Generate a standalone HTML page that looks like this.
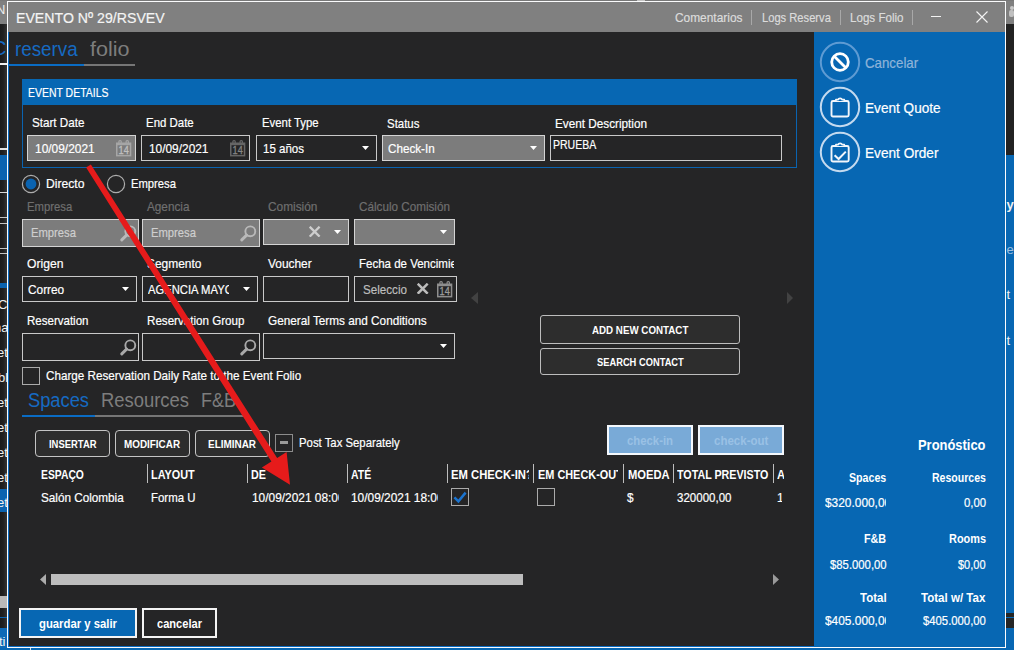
<!DOCTYPE html>
<html lang="es"><head><meta charset="utf-8"><title>EVENTO Nº 29/RSVEV</title>
<style>
html,body{margin:0;padding:0}
body{width:1014px;height:650px;overflow:hidden;position:relative;background:#1e1e1e;font-family:"Liberation Sans", sans-serif;}
.r{position:absolute;display:block}
.t{position:absolute;white-space:pre;transform-origin:0 0;display:block}
.k{-webkit-text-stroke:0.2px currentColor}
.clip{position:absolute;overflow:hidden}
</style></head>
<body>
<div class="r" style="left:0px;top:0px;width:8px;height:24px;background:#808080;"></div>
<div class="r" style="left:0px;top:24px;width:8px;height:626px;background:linear-gradient(90deg,#1b1b1b 0,#202020 40%,#3a3a3a 100%);"></div>
<span class="t" style="left:-4px;top:3px;font-size:13px;line-height:13px;color:#ececec;">N</span>
<span class="t" style="left:-8px;top:38px;font-size:20px;line-height:20px;color:#166ac2;">C</span>
<div class="r" style="left:0px;top:63px;width:8px;height:2px;background:#f0f0f0;"></div>
<div class="r" style="left:0px;top:148px;width:8px;height:2px;background:#e4e4e4;"></div>
<div class="r" style="left:0px;top:155px;width:8px;height:25px;background:#0a63b0;"></div>
<div class="r" style="left:0px;top:192px;width:8px;height:1px;background:#d8d8d8;"></div>
<div class="r" style="left:0px;top:217px;width:8px;height:1px;background:#c4c4c4;"></div>
<div class="r" style="left:0px;top:223px;width:8px;height:1px;background:#c4c4c4;"></div>
<div class="r" style="left:0px;top:248px;width:8px;height:1px;background:#c4c4c4;"></div>
<div class="r" style="left:0px;top:253px;width:8px;height:1px;background:#c4c4c4;"></div>
<div class="r" style="left:0px;top:283px;width:8px;height:5px;background:#0a63b0;"></div>
<span class="t" style="left:-2px;top:298px;font-size:13px;line-height:13px;color:#f0f0f0;">C</span>
<span class="t" style="left:-6px;top:321px;font-size:13px;line-height:13px;color:#f0f0f0;">ha</span>
<span class="t" style="left:-3px;top:346px;font-size:13px;line-height:13px;color:#f0f0f0;">et</span>
<span class="t" style="left:-2px;top:371px;font-size:13px;line-height:13px;color:#f0f0f0;">bl</span>
<span class="t" style="left:-3px;top:396px;font-size:13px;line-height:13px;color:#f0f0f0;">et</span>
<span class="t" style="left:-3px;top:421px;font-size:13px;line-height:13px;color:#f0f0f0;">et</span>
<span class="t" style="left:-3px;top:446px;font-size:13px;line-height:13px;color:#f0f0f0;">et</span>
<span class="t" style="left:-3px;top:471px;font-size:13px;line-height:13px;color:#f0f0f0;">et</span>
<div class="r" style="left:0px;top:489px;width:8px;height:23px;background:#0a63b0;"></div>
<span class="t" style="left:-3px;top:496px;font-size:13px;line-height:13px;color:#f0f0f0;">et</span>
<div class="r" style="left:0px;top:596px;width:8px;height:12px;background:#b9b9b9;"></div>
<div class="r" style="left:0px;top:617px;width:8px;height:1px;background:#0a63b0;"></div>
<div class="r" style="left:0px;top:628px;width:8px;height:22px;background:#0d69b6;"></div>
<span class="t" style="left:-1px;top:635px;font-size:13px;line-height:13px;color:#f4f4f4;">ti</span>
<div class="r" style="left:1006px;top:0px;width:8px;height:24px;background:#808080;"></div>
<div class="r" style="left:1010px;top:6px;width:4px;height:4px;background:#c8c8c8;border-radius:2px;"></div>
<div class="r" style="left:1009px;top:10px;width:5px;height:7px;background:#c0c0c0;border-radius:2px;"></div>
<div class="r" style="left:1006px;top:24px;width:8px;height:131px;background:#222222;"></div>
<div class="r" style="left:1006px;top:155px;width:8px;height:495px;background:#0767b3;"></div>
<div class="r" style="left:1006px;top:613px;width:8px;height:4px;background:#252525;"></div>
<div class="r" style="left:1006px;top:618px;width:8px;height:10px;background:#252525;"></div>
<span class="t" style="left:1006.5px;top:198px;font-size:13px;line-height:13px;color:#f0f0f0;font-weight:700;">yo</span>
<span class="t" style="left:1006.5px;top:243px;font-size:13px;line-height:13px;color:#9dbfe0;">e</span>
<span class="t" style="left:1006.5px;top:288px;font-size:13px;line-height:13px;color:#f0f0f0;">t</span>
<span class="t" style="left:1006.5px;top:334px;font-size:13px;line-height:13px;color:#f0f0f0;">t</span>
<div class="r" style="left:0px;top:648px;width:1014px;height:2px;background:#0767b3;"></div>
<div class="r" style="left:30px;top:648px;width:1px;height:2px;background:#d0e0f0;"></div>
<div class="r" style="left:0px;top:0px;width:1014px;height:1px;background:#787878;"></div>
<div class="r" style="left:637px;top:0px;width:8px;height:1px;background:#c4c4c4;"></div>
<div class="r" style="left:7px;top:1px;width:999px;height:647px;background:#252526;border:1px solid #fbfcfd;box-sizing:border-box;"></div>
<div class="r" style="left:8px;top:2px;width:997px;height:30px;background:#808080;"></div>
<div class="r" style="left:8px;top:32px;width:1px;height:615px;background:#0a6cc4;"></div>
<div class="r" style="left:8px;top:646px;width:997px;height:1px;background:#0a6cc4;"></div>
<div class="r" style="left:751px;top:10px;width:1px;height:15px;background:#a8a8a8;"></div>
<div class="r" style="left:840px;top:10px;width:1px;height:15px;background:#a8a8a8;"></div>
<div class="r" style="left:912px;top:10px;width:1px;height:15px;background:#a8a8a8;"></div>
<div class="r" style="left:931px;top:16px;width:10px;height:1px;background:#f2f2f2;"></div>
<svg class="r" style="left:976px;top:11px" width="12" height="12" viewBox="0 0 12 12"><path d="M0.5 0.5L11.5 11.5M11.5 0.5L0.5 11.5" stroke="#f4f4f4" stroke-width="1.1" fill="none"/></svg>
<div class="r" style="left:9px;top:64px;width:75px;height:2px;background:#0a6cc4;"></div>
<div class="r" style="left:84px;top:64px;width:51px;height:2px;background:#767676;"></div>
<div class="r" style="left:814px;top:32px;width:191px;height:615px;background:#0767b3;"></div>
<div class="r" style="left:22px;top:79px;width:775px;height:89px;border:1px solid #0a63b0;box-sizing:border-box;"></div>
<div class="r" style="left:22px;top:79px;width:775px;height:26px;background:#0767b3;"></div>
<div class="r" style="left:27px;top:135px;width:109px;height:26px;background:#7c7c7c;border:1px solid #d4d4d4;box-sizing:border-box;"></div>
<div class="r" style="left:141px;top:135px;width:109px;height:26px;border:1px solid #c9c9c9;box-sizing:border-box;"></div>
<div class="r" style="left:256px;top:135px;width:121px;height:26px;border:1px solid #c9c9c9;box-sizing:border-box;"></div>
<div class="r" style="left:382px;top:135px;width:163px;height:26px;background:#7c7c7c;border:1px solid #d4d4d4;box-sizing:border-box;"></div>
<div class="r" style="left:550px;top:135px;width:232px;height:26px;border:1px solid #c9c9c9;box-sizing:border-box;"></div>
<svg class="r" style="left:116px;top:140px" width="16" height="17" viewBox="0 0 16 17"><rect x="0.75" y="3.25" width="13.8" height="12.4" fill="none" stroke="#a6a6a6" stroke-width="1.5"/><rect x="0.75" y="3" width="13.8" height="2.2" fill="#a6a6a6"/><rect x="2.9" y="0.7" width="2.3" height="3.6" rx="0.9" fill="none" stroke="#a6a6a6" stroke-width="1.2"/><rect x="10.1" y="0.7" width="2.3" height="3.6" rx="0.9" fill="none" stroke="#a6a6a6" stroke-width="1.2"/><text x="7.7" y="14.3" font-family='"Liberation Sans", sans-serif' font-size="10.4" text-anchor="middle" fill="#c0c0c0" stroke="#c0c0c0" stroke-width="0.3" textLength="10.2" lengthAdjust="spacingAndGlyphs">14</text></svg>
<svg class="r" style="left:230px;top:140px" width="16" height="17" viewBox="0 0 16 17"><rect x="0.75" y="3.25" width="13.8" height="12.4" fill="none" stroke="#666666" stroke-width="1.5"/><rect x="0.75" y="3" width="13.8" height="2.2" fill="#666666"/><rect x="2.9" y="0.7" width="2.3" height="3.6" rx="0.9" fill="none" stroke="#666666" stroke-width="1.2"/><rect x="10.1" y="0.7" width="2.3" height="3.6" rx="0.9" fill="none" stroke="#666666" stroke-width="1.2"/><text x="7.7" y="14.3" font-family='"Liberation Sans", sans-serif' font-size="10.4" text-anchor="middle" fill="#858585" stroke="#858585" stroke-width="0.3" textLength="10.2" lengthAdjust="spacingAndGlyphs">14</text></svg>
<svg class="r" style="left:362px;top:146px" width="7" height="4" viewBox="0 0 7 4"><path d="M0 0H7L3.5 4Z" fill="#fff"/></svg>
<svg class="r" style="left:530px;top:146px" width="7" height="4" viewBox="0 0 7 4"><path d="M0 0H7L3.5 4Z" fill="#fff"/></svg>
<svg class="r" style="left:21px;top:174px" width="20" height="20" viewBox="0 0 20 20"><circle cx="10" cy="10" r="8.6" fill="none" stroke="#adadad" stroke-width="1.2"/><circle cx="10" cy="10" r="5.4" fill="#0a63b0"/></svg>
<svg class="r" style="left:106px;top:174px" width="20" height="20" viewBox="0 0 20 20"><circle cx="10" cy="10" r="8.6" fill="none" stroke="#adadad" stroke-width="1.2"/></svg>
<div class="r" style="left:22px;top:219px;width:117px;height:28px;background:#7c7c7c;border:1px solid #d4d4d4;box-sizing:border-box;"></div>
<div class="r" style="left:142px;top:219px;width:118px;height:28px;background:#7c7c7c;border:1px solid #d4d4d4;box-sizing:border-box;"></div>
<div class="r" style="left:263px;top:219px;width:86px;height:26px;background:#7c7c7c;border:1px solid #d4d4d4;box-sizing:border-box;"></div>
<div class="r" style="left:354px;top:219px;width:101px;height:26px;background:#7c7c7c;border:1px solid #d4d4d4;box-sizing:border-box;"></div>
<svg class="r" style="left:120px;top:225px" width="17" height="17" viewBox="0 0 17 17"><circle cx="10.3" cy="6.3" r="4.95" fill="none" stroke="#b9b9b9" stroke-width="1.9"/><path d="M6.6 10.1L1.8 14.9" stroke="#b9b9b9" stroke-width="2.9" stroke-linecap="round"/></svg>
<svg class="r" style="left:240px;top:225px" width="17" height="17" viewBox="0 0 17 17"><circle cx="10.3" cy="6.3" r="4.95" fill="none" stroke="#b9b9b9" stroke-width="1.9"/><path d="M6.6 10.1L1.8 14.9" stroke="#b9b9b9" stroke-width="2.9" stroke-linecap="round"/></svg>
<svg class="r" style="left:309.3px;top:226.2px" width="11.3" height="11.3" viewBox="0 0 11.3 11.3"><path d="M0.7 0.7L10.600000000000001 10.600000000000001M10.600000000000001 0.7L0.7 10.600000000000001" stroke="#cdcdcd" stroke-width="2.3" fill="none"/></svg>
<svg class="r" style="left:334px;top:230px" width="7" height="4" viewBox="0 0 7 4"><path d="M0 0H7L3.5 4Z" fill="#fff"/></svg>
<svg class="r" style="left:440px;top:230px" width="7" height="4" viewBox="0 0 7 4"><path d="M0 0H7L3.5 4Z" fill="#fff"/></svg>
<div class="r" style="left:22px;top:276px;width:115px;height:26px;border:1px solid #c9c9c9;box-sizing:border-box;"></div>
<div class="r" style="left:142px;top:276px;width:116px;height:26px;border:1px solid #c9c9c9;box-sizing:border-box;"></div>
<div class="r" style="left:263px;top:276px;width:86px;height:26px;border:1px solid #c9c9c9;box-sizing:border-box;"></div>
<div class="r" style="left:354px;top:276px;width:103px;height:26px;border:1px solid #c9c9c9;box-sizing:border-box;"></div>
<svg class="r" style="left:122px;top:287px" width="7" height="4" viewBox="0 0 7 4"><path d="M0 0H7L3.5 4Z" fill="#fff"/></svg>
<svg class="r" style="left:243px;top:287px" width="7" height="4" viewBox="0 0 7 4"><path d="M0 0H7L3.5 4Z" fill="#fff"/></svg>
<svg class="r" style="left:417.4px;top:282.9px" width="11.4" height="11.4" viewBox="0 0 11.4 11.4"><path d="M0.7 0.7L10.700000000000001 10.700000000000001M10.700000000000001 0.7L0.7 10.700000000000001" stroke="#bcbcbc" stroke-width="2.5" fill="none"/></svg>
<svg class="r" style="left:437px;top:280.5px" width="16" height="17" viewBox="0 0 16 17"><rect x="0.75" y="3.25" width="13.8" height="12.4" fill="none" stroke="#8e8e8e" stroke-width="1.5"/><rect x="0.75" y="3" width="13.8" height="2.2" fill="#8e8e8e"/><rect x="2.9" y="0.7" width="2.3" height="3.6" rx="0.9" fill="none" stroke="#8e8e8e" stroke-width="1.2"/><rect x="10.1" y="0.7" width="2.3" height="3.6" rx="0.9" fill="none" stroke="#8e8e8e" stroke-width="1.2"/><text x="7.7" y="14.3" font-family='"Liberation Sans", sans-serif' font-size="10.4" text-anchor="middle" fill="#9c9c9c" stroke="#9c9c9c" stroke-width="0.3" textLength="10.2" lengthAdjust="spacingAndGlyphs">14</text></svg>
<svg class="r" style="left:471px;top:292px" width="7" height="12" viewBox="0 0 7 12"><path d="M7 0V12L0 6Z" fill="#424242"/></svg>
<svg class="r" style="left:787px;top:292px" width="6" height="12" viewBox="0 0 6 12"><path d="M0 0V12L6 6Z" fill="#424242"/></svg>
<div class="r" style="left:22px;top:333px;width:117px;height:28px;border:1px solid #c9c9c9;box-sizing:border-box;"></div>
<div class="r" style="left:142px;top:333px;width:118px;height:28px;border:1px solid #c9c9c9;box-sizing:border-box;"></div>
<div class="r" style="left:263px;top:333px;width:192px;height:26px;border:1px solid #c9c9c9;box-sizing:border-box;"></div>
<svg class="r" style="left:120px;top:339px" width="17" height="17" viewBox="0 0 17 17"><circle cx="10.3" cy="6.3" r="4.95" fill="none" stroke="#a9a9a9" stroke-width="1.9"/><path d="M6.6 10.1L1.8 14.9" stroke="#a9a9a9" stroke-width="2.9" stroke-linecap="round"/></svg>
<svg class="r" style="left:240px;top:339px" width="17" height="17" viewBox="0 0 17 17"><circle cx="10.3" cy="6.3" r="4.95" fill="none" stroke="#a9a9a9" stroke-width="1.9"/><path d="M6.6 10.1L1.8 14.9" stroke="#a9a9a9" stroke-width="2.9" stroke-linecap="round"/></svg>
<svg class="r" style="left:440px;top:344px" width="7" height="4" viewBox="0 0 7 4"><path d="M0 0H7L3.5 4Z" fill="#fff"/></svg>
<div class="r" style="left:540px;top:315px;width:200px;height:28.5px;background:#2d2d2d;border:1px solid #bdbdbd;border-radius:3px;box-sizing:border-box;"></div>
<div class="r" style="left:540px;top:348px;width:200px;height:27px;background:#2d2d2d;border:1px solid #bdbdbd;border-radius:3px;box-sizing:border-box;"></div>
<div class="r" style="left:22px;top:367px;width:18px;height:18px;border:1px solid #ababab;box-sizing:border-box;"></div>
<div class="r" style="left:22px;top:414.5px;width:73px;height:2px;background:#0a6cc4;"></div>
<div class="r" style="left:95px;top:414.5px;width:149px;height:2px;background:#767676;"></div>
<div class="r" style="left:35px;top:430px;width:75px;height:27px;background:#2d2d2d;border:1px solid #c4c4c4;border-radius:4px;box-sizing:border-box;"></div>
<div class="r" style="left:115px;top:430px;width:75px;height:27px;background:#2d2d2d;border:1px solid #c4c4c4;border-radius:4px;box-sizing:border-box;"></div>
<div class="r" style="left:194.5px;top:430px;width:75px;height:27px;background:#2d2d2d;border:1px solid #c4c4c4;border-radius:4px;box-sizing:border-box;"></div>
<div class="r" style="left:275px;top:434px;width:18px;height:18px;border:1px solid #8c8c8c;box-sizing:border-box;"></div>
<div class="r" style="left:280px;top:441px;width:8px;height:3px;background:#9a9a9a;"></div>
<div class="r" style="left:607px;top:425px;width:86px;height:30px;background:#79aad7;border:2px solid #f4f8fc;box-sizing:border-box;"></div>
<div class="r" style="left:698px;top:425px;width:86px;height:30px;background:#79aad7;border:2px solid #f4f8fc;box-sizing:border-box;"></div>
<div class="r" style="left:146.5px;top:464px;width:1px;height:19px;background:#bdbdbd;"></div>
<div class="r" style="left:246.5px;top:464px;width:1px;height:19px;background:#bdbdbd;"></div>
<div class="r" style="left:346.5px;top:464px;width:1px;height:19px;background:#bdbdbd;"></div>
<div class="r" style="left:446.5px;top:464px;width:1px;height:19px;background:#bdbdbd;"></div>
<div class="r" style="left:533.0px;top:464px;width:1px;height:19px;background:#bdbdbd;"></div>
<div class="r" style="left:623.0px;top:464px;width:1px;height:19px;background:#bdbdbd;"></div>
<div class="r" style="left:673.0px;top:464px;width:1px;height:19px;background:#bdbdbd;"></div>
<div class="r" style="left:773.0px;top:464px;width:1px;height:19px;background:#bdbdbd;"></div>
<div class="r" style="left:450.5px;top:488px;width:18px;height:18px;border:1px solid #ababab;box-sizing:border-box;"></div>
<svg class="r" style="left:450.5px;top:488px" width="18" height="18" viewBox="0 0 18 18"><path d="M3.4 9.3L7.4 13.3L14.6 4.6" stroke="#1b74d0" stroke-width="2.5" fill="none"/></svg>
<div class="r" style="left:537px;top:488px;width:18px;height:18px;border:1px solid #ababab;box-sizing:border-box;"></div>
<svg class="r" style="left:40px;top:574px" width="6" height="11" viewBox="0 0 6 11"><path d="M6 0V11L0 5.5Z" fill="#acacac"/></svg>
<div class="r" style="left:51px;top:574px;width:472px;height:11px;background:#bdbdbd;"></div>
<svg class="r" style="left:772.8px;top:574px" width="6" height="11" viewBox="0 0 6 11"><path d="M0 0V11L6 5.5Z" fill="#9a9a9a"/></svg>
<div class="r" style="left:19px;top:608px;width:118px;height:30px;background:#0767b3;border:2px solid #f4f4f4;box-sizing:border-box;"></div>
<div class="r" style="left:141.5px;top:608px;width:75px;height:30px;background:#252526;border:2px solid #f4f4f4;box-sizing:border-box;"></div>
<svg class="r" style="left:819px;top:41px" width="42" height="42" viewBox="0 0 42 42"><circle cx="21" cy="21" r="19.2" fill="none" stroke="#5e9bd3" stroke-width="2"/></svg>
<svg class="r" style="left:819px;top:86px" width="42" height="42" viewBox="0 0 42 42"><circle cx="21" cy="21" r="19.2" fill="none" stroke="#c4daef" stroke-width="2"/></svg>
<svg class="r" style="left:819px;top:131px" width="42" height="42" viewBox="0 0 42 42"><circle cx="21" cy="21" r="19.2" fill="none" stroke="#c4daef" stroke-width="2"/></svg>
<svg class="r" style="left:829px;top:51px" width="22" height="22" viewBox="0 0 22 22"><circle cx="11" cy="11" r="8.3" fill="none" stroke="#fff" stroke-width="2.8"/><path d="M5.2 5.2L16.8 16.8" stroke="#fff" stroke-width="2.8"/></svg>
<svg class="r" style="left:830px;top:96.5px" width="20" height="21" viewBox="0 0 20 21"><rect x="1.5" y="4" width="17.2" height="15.5" rx="1.5" fill="none" stroke="#f2f6fb" stroke-width="1.9"/><path d="M5.9 4V2.7H8.2C8.5 0.8 11.7 0.8 12 2.7H14.3V4" fill="#0767b3" stroke="#f2f6fb" stroke-width="1.7" stroke-linejoin="round"/></svg>
<svg class="r" style="left:830px;top:141.5px" width="20" height="21" viewBox="0 0 20 21"><rect x="1.5" y="4" width="17.2" height="15.5" rx="1.5" fill="none" stroke="#f2f6fb" stroke-width="1.9"/><path d="M5.9 4V2.7H8.2C8.5 0.8 11.7 0.8 12 2.7H14.3V4" fill="#0767b3" stroke="#f2f6fb" stroke-width="1.7" stroke-linejoin="round"/><path d="M4.6 13.2L8.6 17L15.8 9.6" fill="none" stroke="#f2f6fb" stroke-width="2"/></svg>
<span class="t k" style="left:16.46px;top:10px;font-size:15.2px;line-height:15px;color:#f4f4f4;transform:scaleX(0.9311);">EVENTO Nº 29/RSVEV</span>
<span class="t k" style="left:675.46px;top:11px;font-size:13px;line-height:13px;color:#dcdcdc;transform:scaleX(0.9152);">Comentarios</span>
<span class="t k" style="left:761.70px;top:11px;font-size:13px;line-height:13px;color:#dcdcdc;transform:scaleX(0.8583);">Logs Reserva</span>
<span class="t k" style="left:849.68px;top:11px;font-size:13px;line-height:13px;color:#dcdcdc;transform:scaleX(0.8928);">Logs Folio</span>
<span class="t" style="left:15.05px;top:39px;font-size:20.5px;line-height:20px;color:#166ac2;transform:scaleX(0.9166);">reserva</span>
<span class="t" style="left:90.13px;top:39px;font-size:20.5px;line-height:20px;color:#7d7d7d;transform:scaleX(1.0519);">folio</span>
<span class="t k" style="left:27.63px;top:86px;font-size:13px;line-height:13px;color:#fff;transform:scaleX(0.8050);">EVENT DETAILS</span>
<span class="t k" style="left:32.08px;top:116px;font-size:13px;line-height:13px;color:#fff;transform:scaleX(0.8962);">Start Date</span>
<span class="t k" style="left:146.09px;top:116px;font-size:13px;line-height:13px;color:#fff;transform:scaleX(0.8801);">End Date</span>
<span class="t k" style="left:261.59px;top:116px;font-size:13px;line-height:13px;color:#fff;transform:scaleX(0.8749);">Event Type</span>
<span class="t k" style="left:386.58px;top:117px;font-size:13px;line-height:13px;color:#fff;transform:scaleX(0.8805);">Status</span>
<span class="t k" style="left:555.47px;top:117px;font-size:13px;line-height:13px;color:#fff;transform:scaleX(0.9034);">Event Description</span>
<span class="t k" style="left:34.56px;top:142px;font-size:13px;line-height:13px;color:#fff;transform:scaleX(0.9174);">10/09/2021</span>
<span class="t k" style="left:148.57px;top:142px;font-size:13px;line-height:13px;color:#fff;transform:scaleX(0.9136);">10/09/2021</span>
<span class="t k" style="left:262.83px;top:142px;font-size:13px;line-height:13px;color:#fff;transform:scaleX(0.8852);">15 años</span>
<span class="t k" style="left:387.82px;top:142px;font-size:13px;line-height:13px;color:#fff;transform:scaleX(0.8976);">Check-In</span>
<span class="t k" style="left:553.13px;top:139px;font-size:12.5px;line-height:12px;color:#fff;transform:scaleX(0.8406);">PRUEBA</span>
<span class="t k" style="left:46.05px;top:177px;font-size:13px;line-height:13px;color:#fff;transform:scaleX(0.9336);">Directo</span>
<span class="t k" style="left:131.09px;top:177px;font-size:13px;line-height:13px;color:#fff;transform:scaleX(0.8640);">Empresa</span>
<span class="t k" style="left:27.09px;top:200px;font-size:13px;line-height:13px;color:#6f6f6f;transform:scaleX(0.8688);">Empresa</span>
<span class="t k" style="left:146.82px;top:200px;font-size:13px;line-height:13px;color:#6f6f6f;transform:scaleX(0.9036);">Agencia</span>
<span class="t k" style="left:268.07px;top:200px;font-size:13px;line-height:13px;color:#6f6f6f;transform:scaleX(0.9126);">Comisión</span>
<span class="t k" style="left:359.07px;top:200px;font-size:13px;line-height:13px;color:#6f6f6f;transform:scaleX(0.8991);">Cálculo Comisión</span>
<span class="t k" style="left:31.34px;top:226px;font-size:13px;line-height:13px;color:#cfcfcf;transform:scaleX(0.8640);">Empresa</span>
<span class="t k" style="left:150.84px;top:226px;font-size:13px;line-height:13px;color:#cfcfcf;transform:scaleX(0.8640);">Empresa</span>
<span class="t k" style="left:27.05px;top:257px;font-size:13px;line-height:13px;color:#fff;transform:scaleX(0.9339);">Origen</span>
<span class="t k" style="left:146.56px;top:257px;font-size:13px;line-height:13px;color:#fff;transform:scaleX(0.9188);">Segmento</span>
<span class="t k" style="left:268.06px;top:257px;font-size:13px;line-height:13px;color:#fff;transform:scaleX(0.9161);">Voucher</span>
<div class="clip" style="left:359.08px;top:254px;width:94.92px;height:21px"><span class="t k" style="left:0;top:3px;font-size:13px;line-height:13px;color:#fff;transform:scaleX(0.8850);">Fecha de Vencimiento</span></div>
<span class="t k" style="left:28.07px;top:283px;font-size:13px;line-height:13px;color:#fff;transform:scaleX(0.9108);">Correo</span>
<div class="clip" style="left:147.59px;top:280px;width:81.41px;height:21px"><span class="t k" style="left:0;top:3px;font-size:13px;line-height:13px;color:#fff;transform:scaleX(0.8650);">AGENCIA MAYORISTA</span></div>
<div class="clip" style="left:362.58px;top:280px;width:44.92px;height:21px"><span class="t k" style="left:0;top:3px;font-size:13px;line-height:13px;color:#bdbdbd;transform:scaleX(0.8950);">Seleccione</span></div>
<span class="t k" style="left:27.08px;top:314px;font-size:13px;line-height:13px;color:#fff;transform:scaleX(0.8858);">Reservation</span>
<span class="t k" style="left:146.83px;top:314px;font-size:13px;line-height:13px;color:#fff;transform:scaleX(0.8930);">Reservation Group</span>
<span class="t k" style="left:268.07px;top:314px;font-size:13px;line-height:13px;color:#fff;transform:scaleX(0.9050);">General Terms and Conditions</span>
<span class="t k" style="left:46.07px;top:369px;font-size:13px;line-height:13px;color:#fff;transform:scaleX(0.8987);">Charge Reservation Daily Rate to the Event Folio</span>
<span class="t" style="left:27.78px;top:390px;font-size:20px;line-height:20px;color:#166ac2;transform:scaleX(0.9146);">Spaces</span>
<span class="t" style="left:100.77px;top:390px;font-size:20px;line-height:20px;color:#7d7d7d;transform:scaleX(0.9206);">Resources</span>
<span class="t" style="left:200.79px;top:390px;font-size:20px;line-height:20px;color:#7d7d7d;transform:scaleX(0.9001);">F&amp;B</span>
<span class="t" style="left:48.93px;top:439px;font-size:11px;line-height:11px;color:#fff;transform:scaleX(0.8578);font-weight:700;">INSERTAR</span>
<span class="t" style="left:124.40px;top:439px;font-size:11px;line-height:11px;color:#fff;transform:scaleX(0.8991);font-weight:700;">MODIFICAR</span>
<span class="t" style="left:208.15px;top:439px;font-size:11px;line-height:11px;color:#fff;transform:scaleX(0.9035);font-weight:700;">ELIMINAR</span>
<span class="t k" style="left:299.34px;top:436px;font-size:13px;line-height:13px;color:#fff;transform:scaleX(0.8727);">Post Tax Separately</span>
<span class="t" style="left:627.49px;top:434px;font-size:13px;line-height:13px;color:#9ac1e5;transform:scaleX(0.8730);font-weight:700;">check-in</span>
<span class="t" style="left:714.48px;top:434px;font-size:13px;line-height:13px;color:#9ac1e5;transform:scaleX(0.8851);font-weight:700;">check-out</span>
<span class="t" style="left:41.38px;top:469px;font-size:12.5px;line-height:12px;color:#fff;transform:scaleX(0.8272);font-weight:700;">ESPAÇO</span>
<span class="t" style="left:151.11px;top:469px;font-size:12.5px;line-height:12px;color:#fff;transform:scaleX(0.8689);font-weight:700;">LAYOUT</span>
<span class="t" style="left:251.37px;top:469px;font-size:12.5px;line-height:12px;color:#fff;transform:scaleX(0.8583);font-weight:700;">DE</span>
<span class="t" style="left:350.88px;top:469px;font-size:12.5px;line-height:12px;color:#fff;transform:scaleX(0.8374);font-weight:700;">ATÉ</span>
<div class="clip" style="left:451.09px;top:466px;width:78.41px;height:20px"><span class="t" style="left:0;top:3px;font-size:12.5px;line-height:12px;color:#fff;transform:scaleX(0.9000);font-weight:700;">EM CHECK-IN?</span></div>
<div class="clip" style="left:537.61px;top:466px;width:80.39px;height:20px"><span class="t" style="left:0;top:3px;font-size:12.5px;line-height:12px;color:#fff;transform:scaleX(0.8720);font-weight:700;">EM CHECK-OUT?</span></div>
<span class="t" style="left:627.50px;top:469px;font-size:12.5px;line-height:12px;color:#fff;transform:scaleX(0.8943);font-weight:700;">MOEDA</span>
<span class="t" style="left:677.12px;top:469px;font-size:12.5px;line-height:12px;color:#fff;transform:scaleX(0.8564);font-weight:700;">TOTAL PREVISTO</span>
<div class="clip" style="left:777.09px;top:466px;width:6.91px;height:20px"><span class="t" style="left:0;top:3px;font-size:12.5px;line-height:12px;color:#fff;transform:scaleX(0.9000);font-weight:700;">ATUAL</span></div>
<span class="t k" style="left:41.32px;top:491px;font-size:13px;line-height:13px;color:#fff;transform:scaleX(0.9011);">Salón Colombia</span>
<span class="t k" style="left:151.09px;top:491px;font-size:13px;line-height:13px;color:#fff;transform:scaleX(0.8792);">Forma U</span>
<div class="clip" style="left:251.56px;top:488px;width:87.44px;height:21px"><span class="t k" style="left:0;top:3px;font-size:13px;line-height:13px;color:#fff;transform:scaleX(0.9150);">10/09/2021 08:00</span></div>
<div class="clip" style="left:351.06px;top:488px;width:87.44px;height:21px"><span class="t k" style="left:0;top:3px;font-size:13px;line-height:13px;color:#fff;transform:scaleX(0.9150);">10/09/2021 18:00</span></div>
<span class="t k" style="left:627.47px;top:491px;font-size:13px;line-height:13px;color:#fff;transform:scaleX(0.9058);">$</span>
<span class="t k" style="left:677.08px;top:491px;font-size:13px;line-height:13px;color:#fff;transform:scaleX(0.8861);">320000,00</span>
<div class="clip" style="left:777.06px;top:488px;width:5.24px;height:21px"><span class="t k" style="left:0;top:3px;font-size:13px;line-height:13px;color:#fff;transform:scaleX(0.9150);">10</span></div>
<span class="t" style="left:591.96px;top:325px;font-size:11px;line-height:11px;color:#fff;transform:scaleX(0.8879);font-weight:700;">ADD NEW CONTACT</span>
<span class="t" style="left:596.78px;top:357px;font-size:11px;line-height:11px;color:#fff;transform:scaleX(0.8470);font-weight:700;">SEARCH CONTACT</span>
<span class="t" style="left:39.09px;top:617px;font-size:13px;line-height:13px;color:#fff;transform:scaleX(0.8699);font-weight:700;">guardar y salir</span>
<span class="t" style="left:156.85px;top:617px;font-size:13px;line-height:13px;color:#fff;transform:scaleX(0.8519);font-weight:700;">cancelar</span>
<span class="t k" style="left:864.60px;top:56px;font-size:14.5px;line-height:14px;color:#8fb4d9;transform:scaleX(0.9163);">Cancelar</span>
<span class="t k" style="left:865.49px;top:101px;font-size:14.5px;line-height:14px;color:#fff;transform:scaleX(0.9388);">Event Quote</span>
<span class="t k" style="left:865.49px;top:146px;font-size:14.5px;line-height:14px;color:#fff;transform:scaleX(0.9399);">Event Order</span>
<span class="t" style="left:918.22px;top:437px;font-size:15px;line-height:15px;color:#fff;transform:scaleX(0.8618);font-weight:700;">Pronóstico</span>
<span class="t" style="left:849.02px;top:471px;font-size:13px;line-height:13px;color:#fff;transform:scaleX(0.8179);font-weight:700;">Spaces</span>
<span class="t" style="left:931.73px;top:471px;font-size:13px;line-height:13px;color:#fff;transform:scaleX(0.8115);font-weight:700;">Resources</span>
<div class="clip" style="left:824.91px;top:493px;width:61.09px;height:21px"><span class="t k" style="left:0;top:3px;font-size:13px;line-height:13px;color:#fff;transform:scaleX(0.9150);">$320.000,00</span></div>
<span class="t k" style="left:963.59px;top:496px;font-size:13px;line-height:13px;color:#fff;transform:scaleX(0.8712);">0,00</span>
<span class="t" style="left:864.11px;top:532px;font-size:13px;line-height:13px;color:#fff;transform:scaleX(0.8291);font-weight:700;">F&amp;B</span>
<span class="t" style="left:948.61px;top:532px;font-size:13px;line-height:13px;color:#fff;transform:scaleX(0.8409);font-weight:700;">Rooms</span>
<span class="t k" style="left:829.59px;top:558px;font-size:13px;line-height:13px;color:#fff;transform:scaleX(0.8705);">$85.000,00</span>
<span class="t k" style="left:958.10px;top:558px;font-size:13px;line-height:13px;color:#fff;transform:scaleX(0.8466);">$0,00</span>
<span class="t" style="left:859.58px;top:591px;font-size:13px;line-height:13px;color:#fff;transform:scaleX(0.8857);font-weight:700;">Total</span>
<span class="t" style="left:921.28px;top:591px;font-size:13px;line-height:13px;color:#fff;transform:scaleX(0.8878);font-weight:700;">Total w/ Tax</span>
<div class="clip" style="left:824.91px;top:611px;width:61.09px;height:21px"><span class="t k" style="left:0;top:3px;font-size:13px;line-height:13px;color:#fff;transform:scaleX(0.9150);">$405.000,00</span></div>
<span class="t k" style="left:922.79px;top:614px;font-size:13px;line-height:13px;color:#fff;transform:scaleX(0.8694);">$405.000,00</span>
<svg class="r" style="left:0;top:0" width="1014" height="650" viewBox="0 0 1014 650"><polygon points="90.87,164.5 277.14,457.98 286.6,452 290,484.7 261.9,467.6 271.4,461.6 86.13,167.5" fill="#e61b1b"/></svg>
</body></html>
